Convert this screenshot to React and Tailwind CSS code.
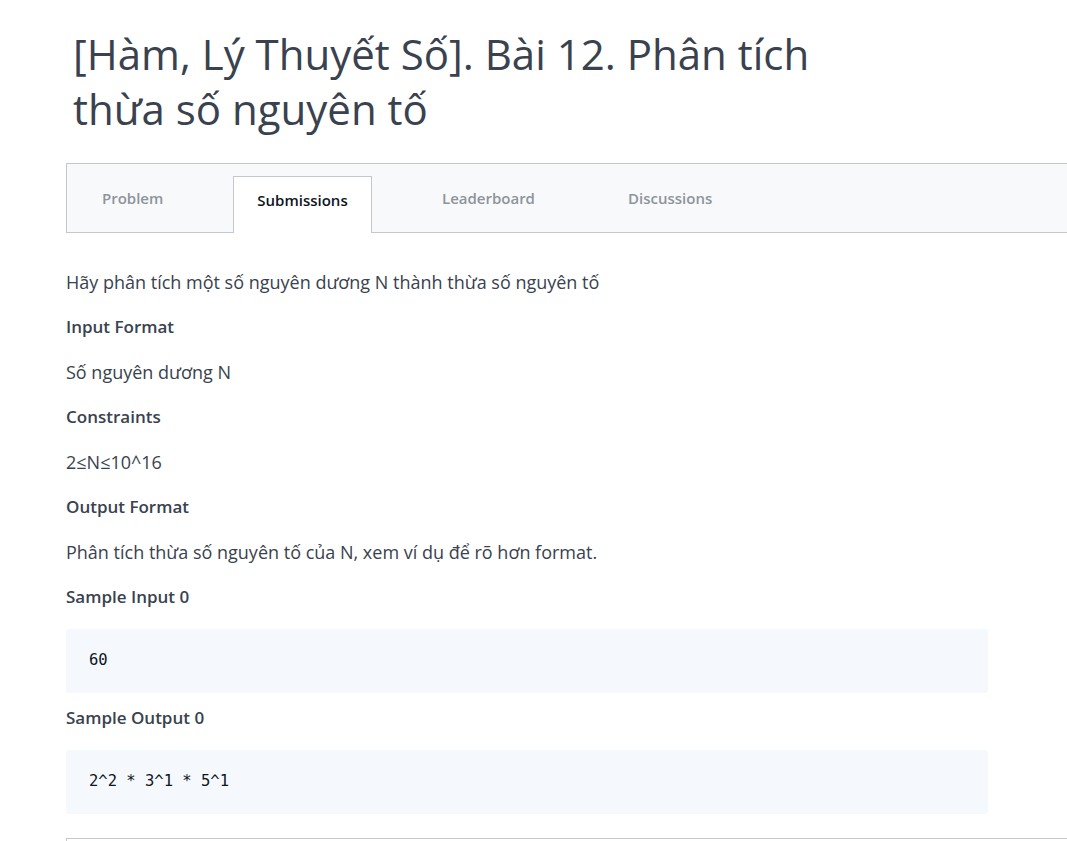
const tabs = [
  { label: "Problem", active: false, cls: "w-[166px] pl-[35px]" },
  { label: "Submissions", active: true, cls: "w-[139px] justify-center" },
  { label: "Leaderboard", active: false, cls: "w-[233px] pl-[70px]" },
  { label: "Discussions", active: false, cls: "w-[140px] pl-[23px]" },
];

function Heading({ children, tight }) {
  return (
    <h3 className={`font-semibold text-[17px] leading-[24px] ${tight ? "mt-[13px]" : "mt-[21px]"}`}>
      {children}
    </h3>
  );
}

function Para({ children }) {
  return <p className="text-[18px] leading-[24px] mt-[21px]">{children}</p>;
}

function CodeBlock({ children }) {
  return (
    <div className="mt-[20px] w-[922px] h-[64px] bg-[#f5f9fe] rounded-[3px] flex items-center px-[23px]">
      <pre className="font-['DejaVu_Sans_Mono',monospace] text-[15.5px] text-[#0e141e]">{children}</pre>
    </div>
  );
}

export default function App() {
  return (
    <div className="min-h-[841px] bg-white text-[#39424e] font-['Open_Sans',sans-serif] overflow-hidden">
      {/* Title */}
      <div className="pl-[73px] pt-[26px]">
        <h1 className="text-[42px] leading-[55px] font-medium text-[#39424e] w-[780px]">
          [Hàm, Lý Thuyết Số]. Bài 12. Phân tích thừa số nguyên tố
        </h1>
      </div>

      <div className="pl-[66px]">
        {/* Tabs */}
        <div className="mt-[27px] h-[70px] bg-[#f8f9fa] border-y border-l border-[#c2c7d0] flex items-end">
          {tabs.map((t) =>
            t.active ? (
              <div
                key={t.label}
                className={`${t.cls} h-[57px] mb-[-1px] pb-[10px] bg-white border-x border-t border-[#c2c7d0] flex items-center text-[15px] font-semibold text-[#0e141e]`}
              >
                {t.label}
              </div>
            ) : (
              <div
                key={t.label}
                className={`${t.cls} h-[57px] pb-[10px] flex items-center text-[15px] font-semibold text-[#8d949c]`}
              >
                {t.label}
              </div>
            )
          )}
        </div>

        {/* Statement */}
        <div className="pt-[14px]">
          <p className="text-[18px] leading-[24px] mt-[23px]">Hãy phân tích một số nguyên dương N thành thừa số nguyên tố</p>
          <Heading>Input Format</Heading>
          <Para>Số nguyên dương N</Para>
          <Heading>Constraints</Heading>
          <Para>2≤N≤10^16</Para>
          <Heading>Output Format</Heading>
          <Para>Phân tích thừa số nguyên tố của N, xem ví dụ để rõ hơn format.</Para>
          <Heading>Sample Input 0</Heading>
          <CodeBlock>60</CodeBlock>
          <Heading tight>Sample Output 0</Heading>
          <CodeBlock>2^2 * 3^1 * 5^1</CodeBlock>
          <div className="mt-[24px] h-[20px] border-t border-l border-[#c2c7d0] bg-white"></div>
        </div>
      </div>
    </div>
  );
}
